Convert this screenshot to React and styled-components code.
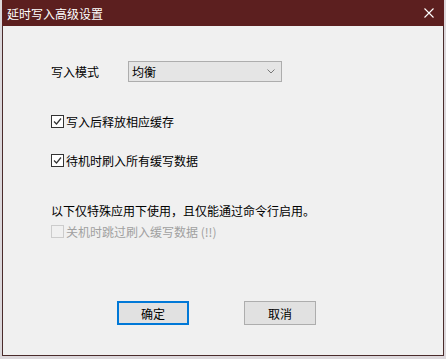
import React from "react";
import styled, { createGlobalStyle } from "styled-components";

const Global = createGlobalStyle`
  html, body {
    margin: 0;
    padding: 0;
    background: #dcd8dc;
    font-family: "Noto Sans CJK SC", "Microsoft YaHei", sans-serif;
    font-size: 12px;
  }
`;

const Win = styled.div`
  margin-left: 2px;
  width: 440px;
  height: 355px;
  border: 1px solid #4a2b2b;
  border-top: none;
  background: #f0f0f0;
  display: flex;
  flex-direction: column;
`;

const TitleBar = styled.div`
  height: 26px;
  margin: 0 -1px;
  background: #5c1f1f;
  color: #fff;
  display: flex;
  align-items: center;
  justify-content: space-between;
  padding: 0 0 0 5px;
  font-size: 12px;
`;

const Close = styled.div`
  width: 30px;
  height: 26px;
  display: flex;
  align-items: center;
  justify-content: center;
`;

const Body = styled.div`
  flex: 1;
  display: flex;
  flex-direction: column;
  padding: 35px 0 0 48px;
  color: #000;
`;

const Row = styled.div`
  display: flex;
  align-items: center;
  height: ${(p) => p.h || 16}px;
  margin-top: ${(p) => p.mt || 0}px;
  color: ${(p) => (p.disabled ? "#a0a0a0" : "#000")};
`;

const Label = styled.div`
  width: 77px;
  line-height: 16px;
`;

const Select = styled.div`
  height: 19px;
  width: 143px;
  border: 1px solid #adadad;
  background: #e5e5e5;
  display: flex;
  align-items: center;
  justify-content: space-between;
  padding: 0 6px 0 3px;
`;

const Box = styled.div`
  width: 11px;
  height: 11px;
  border: 1px solid ${(p) => (p.disabled ? "#cccccc" : "#333")};
  background: ${(p) => (p.disabled ? "#f0f0f0" : "#fff")};
  margin-right: 2px;
  display: flex;
  align-items: center;
  justify-content: center;
`;

const Buttons = styled.div`
  display: flex;
  margin-top: auto;
  margin-bottom: 30px;
  padding-left: 66px;
  gap: 55px;
`;

const Button = styled.div`
  width: ${(p) => (p.primary ? 68 : 70)}px;
  height: ${(p) => (p.primary ? 20 : 22)}px;
  border: ${(p) => (p.primary ? "2px solid #0078d7" : "1px solid #adadad")};
  background: #e1e1e1;
  display: flex;
  align-items: center;
  justify-content: center;
  font-size: 12px;
`;

const Check = ({ checked, disabled }) => (
  <Box disabled={disabled}>
    {checked && (
      <svg width="9" height="9" viewBox="0 0 9 9">
        <path d="M1 4.5 L3.5 7 L8 1.5" fill="none" stroke="#333" strokeWidth="1.2" />
      </svg>
    )}
  </Box>
);

export default function App() {
  return (
    <>
      <Global />
      <Win>
        <TitleBar>
          <span>延时写入高级设置</span>
          <Close>
            <svg width="10" height="10" viewBox="0 0 10 10">
              <path d="M0.5 0.5 L9.5 9.5 M9.5 0.5 L0.5 9.5" stroke="#fff" strokeWidth="1.1" />
            </svg>
          </Close>
        </TitleBar>
        <Body>
          <Row h={21}>
            <Label>写入模式</Label>
            <Select>
              <span>均衡</span>
              <svg width="8" height="5" viewBox="0 0 8 5">
                <path d="M0.5 0.5 L4 4 L7.5 0.5" fill="none" stroke="#777" strokeWidth="1" />
              </svg>
            </Select>
          </Row>
          <Row mt={31}>
            <Check checked />
            <span>写入后释放相应缓存</span>
          </Row>
          <Row mt={23}>
            <Check checked />
            <span>待机时刷入所有缓写数据</span>
          </Row>
          <Row mt={34}>以下仅特殊应用下使用，且仅能通过命令行启用。</Row>
          <Row mt={5} disabled>
            <Check disabled />
            <span>关机时跳过刷入缓写数据 (!!)</span>
          </Row>
          <Buttons>
            <Button primary>确定</Button>
            <Button>取消</Button>
          </Buttons>
        </Body>
      </Win>
    </>
  );
}
